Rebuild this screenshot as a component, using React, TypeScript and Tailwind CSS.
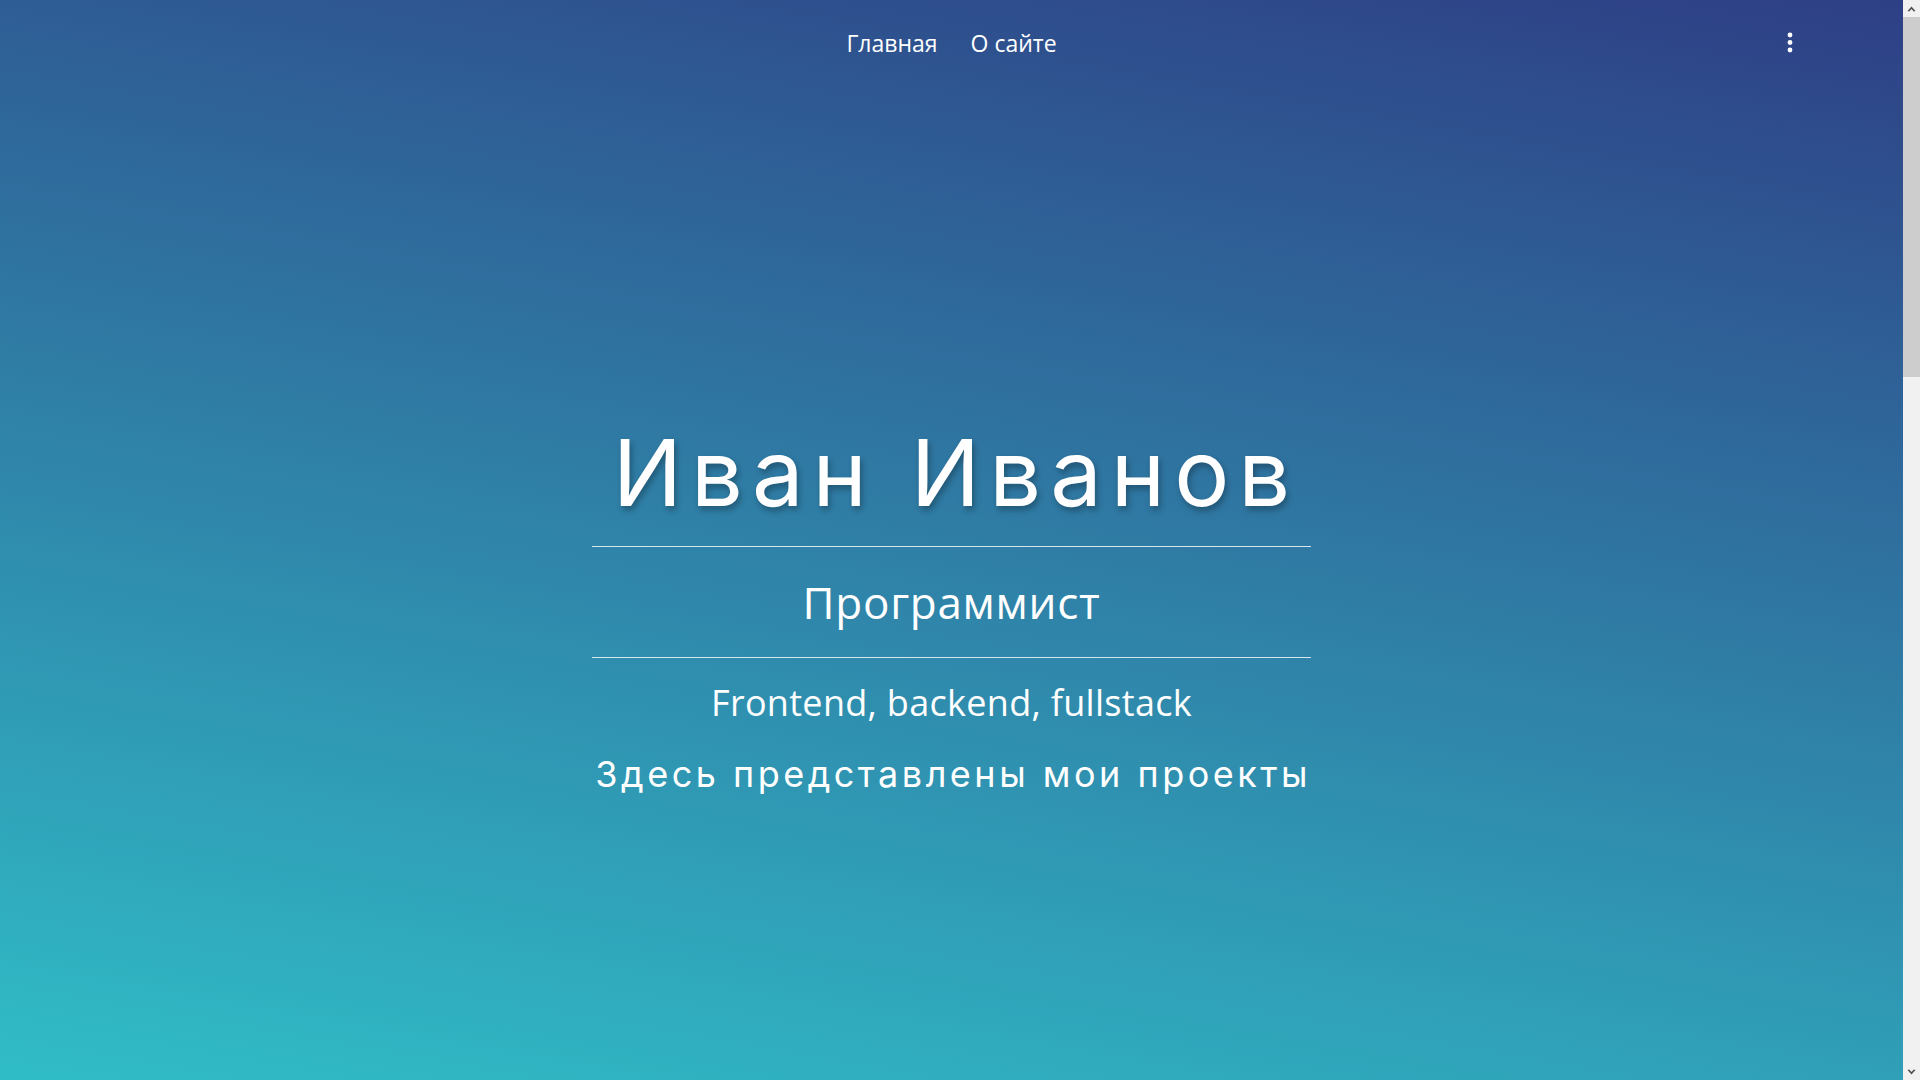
import React from "react";

const montserrat = { fontFamily: '"Inter", "Noto Sans", sans-serif' };
const nunito = { fontFamily: '"Open Sans", "Noto Sans", sans-serif' };

function ScrollBar() {
  return (
    <aside className="flex h-full w-[17px] shrink-0 flex-col bg-[#f1f1f1]">
      <div className="flex h-[17px] items-center justify-center">
        <svg width="9" height="6" viewBox="0 0 9 6">
          <polygon points="4.5,0.5 8.5,5 6.8,5.5 4.5,3 2.2,5.5 0.5,5" fill="#505050" />
        </svg>
      </div>
      <div className="h-[360px] w-full bg-[#cdcdcd]" />
      <div className="flex-1" />
      <div className="flex h-[17px] items-center justify-center">
        <svg width="9" height="6" viewBox="0 0 9 6">
          <polygon points="4.5,5.5 8.5,1 6.8,0.5 4.5,3 2.2,0.5 0.5,1" fill="#505050" />
        </svg>
      </div>
    </aside>
  );
}

export default function App() {
  return (
    <div className="flex h-screen w-full overflow-hidden">
      <section className="relative h-full min-w-0 flex-1 bg-[linear-gradient(10deg,#30bdc7_0%,#2e3f85_100%)] text-white">
        <header className="grid h-[86px] grid-cols-[1fr_auto_1fr] items-center">
          <div />
          <nav className="flex items-center gap-[33px] text-[23px] leading-none text-white" style={nunito}>
            <a className="cursor-pointer">Главная</a>
            <a className="cursor-pointer">О сайте</a>
          </nav>
          <div className="flex justify-end pr-[110px]">
            <button className="flex h-[24px] w-[6px] items-center justify-center">
              <svg width="6" height="22" viewBox="0 0 6 22" fill="#ffffff">
                <circle cx="3" cy="3" r="2.4" />
                <circle cx="3" cy="10.5" r="2.4" />
                <circle cx="3" cy="18" r="2.4" />
              </svg>
            </button>
          </div>
        </header>

        <div className="flex justify-center pt-[341px]">
          <div className="inline-flex flex-col items-center">
            <h1
              className="pl-[9px] text-[92px] font-normal leading-none tracking-[9px] [text-shadow:2px_4px_6px_rgba(0,0,0,0.3)]"
              style={montserrat}
            >
              Иван Иванов
            </h1>
            <div className="mt-[27px] h-px w-full bg-white/80" />
            <h2 className="mt-[33px] text-[44px] leading-none tracking-[0.7px]" style={nunito}>
              Программист
            </h2>
            <div className="mt-[33px] h-px w-full bg-white/80" />
            <p className="mt-[27px] text-[36px] leading-none tracking-[0.3px]" style={nunito}>
              Frontend, backend, fullstack
            </p>
            <p
              className="mt-[35px] pl-[3.5px] text-[36px] font-normal leading-none tracking-[3.5px]"
              style={montserrat}
            >
              Здесь представлены мои проекты
            </p>
          </div>
        </div>
      </section>
      <ScrollBar />
    </div>
  );
}
